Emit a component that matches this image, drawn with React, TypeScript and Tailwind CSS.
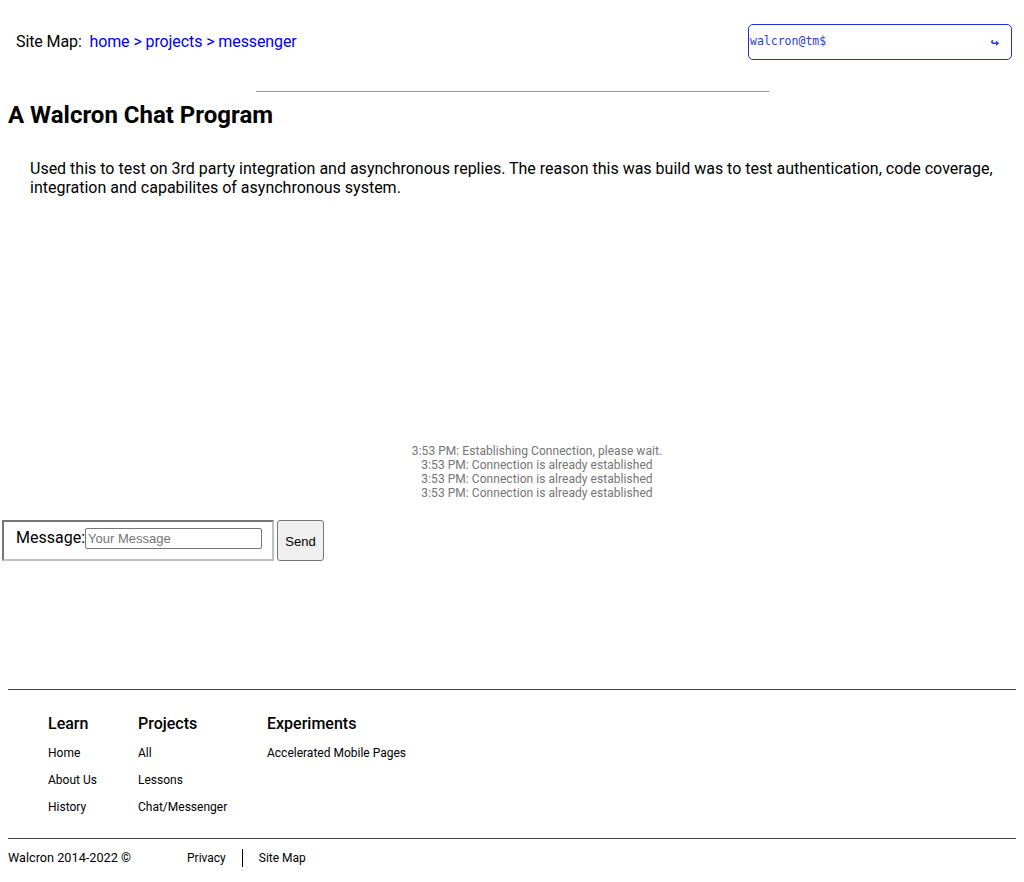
const messages = [
    '3:53 PM: Establishing Connection, please wait.',
    '3:53 PM: Connection is already established',
    '3:53 PM: Connection is already established',
    '3:53 PM: Connection is already established',
]

const footerColumns = [
    { title: 'Learn', width: 'w-[90px]', links: ['Home', 'About Us', 'History'] },
    { title: 'Projects', width: 'w-[129px]', links: ['All', 'Lessons', 'Chat/Messenger'] },
    { title: 'Experiments', width: 'w-[200px]', links: ['Accelerated Mobile Pages'] },
]

export default function App() {
    return (
        <div className="min-h-[882px] bg-white text-black font-['Roboto',sans-serif]">
            {/* header */}
            <div className="flex items-center justify-between pt-6 pr-3 pl-4 h-[60px]">
                <div className="text-[16px] leading-[19px] -mt-[2px] tracking-[-0.1px]">
                    Site Map:&nbsp;&nbsp;
                    <a className="text-[#0000ee]">home</a>
                    <span className="text-[#0000ee]"> &gt; </span>
                    <a className="text-[#0000ee]">projects</a>
                    <span className="text-[#0000ee]"> &gt; </span>
                    <a className="text-[#0000ee]">messenger</a>
                </div>
                <div className="w-[264px] h-[36px] border border-[#1a2fd6] rounded-[5px] flex items-center justify-between pl-[1px] pr-[12px] font-['DejaVu_Sans_Mono',monospace] text-[11.5px] text-[#2b3ccf]">
                    <span>walcron@tm$</span>
                    <span className="text-[14px] font-bold">↪</span>
                </div>
            </div>

            <div className="flex justify-center pt-[31px]">
                <div className="w-[513px] h-0 border-t border-[#9a9a9a]"></div>
            </div>

            <h1 className="ml-2 mt-[9px] text-[24px] leading-[28px] font-bold">
                A Walcron Chat Program
            </h1>

            <p className="ml-[30px] mr-4 mt-[30px] text-[16px] leading-[19px]">
                Used this to test on 3rd party integration and asynchronous replies. The reason this was build was to test authentication, code coverage, integration and capabilites of asynchronous system.
            </p>

            {/* message log */}
            <div className="ml-[50px] mt-[247px] text-center text-[12px] leading-[14px] text-[#757575] tracking-[0.05px]">
                {messages.map((m, i) => (
                    <div key={i}>{m}</div>
                ))}
            </div>

            {/* form */}
            <div className="flex items-stretch gap-[3px] mt-[20px] ml-[2px]">
                <div className="w-[272px] h-[41px] border-2 border-[#767676] border-r-[#c0c0c0] border-b-[#c0c0c0] flex items-start pt-[5px] pl-[12px]">
                    <span className="text-[16px] leading-[19px] mt-[1px]">Message:</span>
                    <input
                        placeholder="Your Message"
                        className="w-[177px] h-[21px] mt-[1px] border border-[#767676] rounded-[2px] px-[2px] font-['Liberation_Sans',sans-serif] text-[13px] placeholder:text-[#757575] outline-none"
                    />
                </div>
                <button className="w-[47px] h-[41px] bg-[#efefef] border border-[#767676] rounded-[3px] font-['Liberation_Sans',sans-serif] text-[13px] pt-[2px]">
                    Send
                </button>
            </div>

            {/* footer */}
            <div className="mx-2 mt-[128px] border-t border-[#444]"></div>
            <div className="flex pl-[48px] pt-[24px] pb-[24px]">
                {footerColumns.map((col) => (
                    <div key={col.title} className={col.width}>
                        <div className="text-[16px] leading-[19px] font-medium">{col.title}</div>
                        <div className="mt-[13px] flex flex-col gap-[13px]">
                            {col.links.map((l) => (
                                <div key={l} className="text-[12px] leading-[14px]">{l}</div>
                            ))}
                        </div>
                    </div>
                ))}
            </div>
            <div className="mx-2 border-t border-[#444]"></div>
            <div className="flex items-center ml-2 mt-[10px] text-[12px] leading-[14px]">
                <span className="w-[179px] text-[12.7px]">Walcron 2014-2022 ©</span>
                <span className="pr-[16px]">Privacy</span>
                <span className="h-[18px] border-l border-black"></span>
                <span className="pl-[16px]">Site Map</span>
            </div>
        </div>
    )
}
